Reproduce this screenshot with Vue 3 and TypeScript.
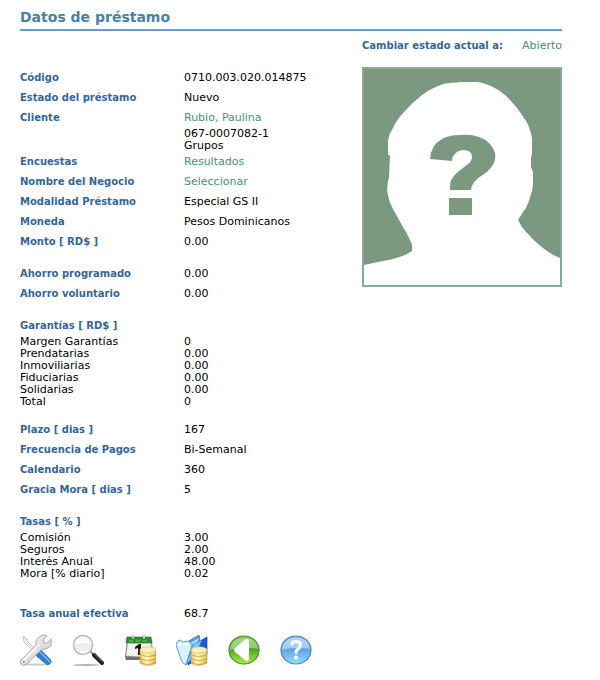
<script setup lang="ts">
interface Row {
  label: string
  value: string
  kind?: 'main' | 'sub' | 'link'
}

const groups: { gap: 'none' | 'small' | 'large'; rows: Row[] }[] = [
  {
    gap: 'none',
    rows: [
      { label: 'Código', value: '0710.003.020.014875' },
      { label: 'Estado del préstamo', value: 'Nuevo' },
      { label: 'Cliente', value: 'Rubio, Paulina', kind: 'link' },
      { label: '', value: '067-0007082-1', kind: 'sub' },
      { label: '', value: 'Grupos', kind: 'sub' },
      { label: 'Encuestas', value: 'Resultados', kind: 'link' },
      { label: 'Nombre del Negocio', value: 'Seleccionar', kind: 'link' },
      { label: 'Modalidad Préstamo', value: 'Especial GS II' },
      { label: 'Moneda', value: 'Pesos Dominicanos' },
      { label: 'Monto [ RD$ ]', value: '0.00' },
    ],
  },
  {
    gap: 'small',
    rows: [
      { label: 'Ahorro programado', value: '0.00' },
      { label: 'Ahorro voluntario', value: '0.00' },
    ],
  },
  {
    gap: 'small',
    rows: [
      { label: 'Garantías [ RD$ ]', value: '' },
      { label: 'Margen Garantías', value: '0', kind: 'sub' },
      { label: 'Prendatarias', value: '0.00', kind: 'sub' },
      { label: 'Inmoviliarias', value: '0.00', kind: 'sub' },
      { label: 'Fiduciarias', value: '0.00', kind: 'sub' },
      { label: 'Solidarias', value: '0.00', kind: 'sub' },
      { label: 'Total', value: '0', kind: 'sub' },
    ],
  },
  {
    gap: 'small',
    rows: [
      { label: 'Plazo [ dias ]', value: '167' },
      { label: 'Frecuencia de Pagos', value: 'Bi-Semanal' },
      { label: 'Calendario', value: '360' },
      { label: 'Gracia Mora [ dias ]', value: '5' },
    ],
  },
  {
    gap: 'small',
    rows: [
      { label: 'Tasas [ % ]', value: '' },
      { label: 'Comisión', value: '3.00', kind: 'sub' },
      { label: 'Seguros', value: '2.00', kind: 'sub' },
      { label: 'Interés Anual', value: '48.00', kind: 'sub' },
      { label: 'Mora [% diario]', value: '0.02', kind: 'sub' },
    ],
  },
  {
    gap: 'large',
    rows: [{ label: 'Tasa anual efectiva', value: '68.7' }],
  },
]
</script>

<template>
  <main class="page">
    <h1 class="title">Datos de préstamo</h1>

    <div class="content">
      <table class="details">
        <tbody v-for="(group, g) in groups" :key="g" :class="'gap-' + group.gap">
          <tr v-for="(row, r) in group.rows" :key="r" :class="row.kind ?? 'main'">
            <th scope="row">{{ row.label }}</th>
            <td>
              <a v-if="row.kind === 'link'" href="#">{{ row.value }}</a>
              <template v-else>{{ row.value }}</template>
            </td>
          </tr>
        </tbody>
      </table>

      <aside class="side">
        <div class="status">
          <strong>Cambiar estado actual a:</strong>
          <a href="#">Abierto</a>
        </div>
        <svg class="photo" viewBox="0 0 196 216" role="img" aria-label="Sin foto">
          <rect width="196" height="216" fill="#7a9980" />
          <path
            fill="#fff"
            d="M0 196 L19 192 Q38 189 48 182 Q49 176 46 171 Q43 164 39 158 L29 140 Q25 133 24 126 Q22 119 25 108 L26 87 L24 85 L24 71 Q25 65 29 59 Q33 50 41 42 Q49 33 58 26 Q66 20 74 17 Q80 14 86 14 L98 13 L114 13 Q121 14 129 18 Q139 23 146 31 Q153 38 158 46 Q165 56 166 61 Q168 66 168 71 L168 85 L167 88 L167 98 L169 103 L169 114 Q169 121 166 128 Q164 137 159 143 L154 151 Q157 158 163 164 Q170 172 179 179 Q188 186 196 189 V216 H0Z"
          />
          <path
            fill="#7a9980"
            d="M66 90 Q67 76 78 70 Q85 66 96 66 Q107 65 115 68 Q127 72 131 84 Q133 96 120 105 Q107 113 107 121 H86 Q85 109 94 103 L104 95 Q108 92 108 88 Q108 81 99 81 Q89 82 88 92 Z M85 129 H108 V146 H85Z"
          />
        </svg>
      </aside>
    </div>

    <nav class="toolbar" aria-label="Acciones">
      <button type="button" aria-label="Configurar">
        <svg viewBox="1 1 32 32">
          <defs>
            <linearGradient id="steel" x1="0" y1="0" x2="1" y2="1">
              <stop offset="0" stop-color="#fafafa" />
              <stop offset="1" stop-color="#c8c8c8" />
            </linearGradient>
            <linearGradient id="gold" x1="0" y1="0" x2="1" y2="0">
              <stop offset="0" stop-color="#e3bd4b" />
              <stop offset=".4" stop-color="#fff8c4" />
              <stop offset="1" stop-color="#dcb544" />
            </linearGradient>
          </defs>
          <ellipse cx="17" cy="31.5" rx="14" ry="1" fill="#c9c9c9" />
          <path d="M4 3 L8 6 L9 9 L20 20 L18 21 L7 11 L5 9Z" fill="#eee" stroke="#b5b5b5" stroke-width=".7" />
          <path d="M16 22 L21 16 L32 27 Q33 31 28 32Z" fill="#2f7fd0" stroke="#2468b0" stroke-width=".5" />
          <path d="M21 19 L31 29" stroke="#7fbdf2" stroke-width="1.5" />
          <path
            d="M2 27 L17 12 Q16 5 22 3 Q25 1 28 3 L24 7 L25 10 L28 10 L32 6 Q34 13 29 15 Q26 17 23 16 L8 31 Q4 34 2 31 Q1 29 2 27Z"
            fill="url(#steel)" stroke="#a0a0a0" stroke-width=".8"
          />
          <path d="M5 27 L20 12" stroke="#fff" stroke-width="1.2" />
          <circle cx="4.8" cy="29" r="1" fill="#999" />
        </svg>
      </button>

      <button type="button" aria-label="Buscar">
        <svg viewBox="1 1 32 32">
          <ellipse cx="15" cy="32" rx="13" ry="1" fill="#b5b5b5" />
          <path d="M19 18 L24 23" stroke="#999" stroke-width="2" />
          <path d="M23 22 L31 30" stroke="#222" stroke-width="4" stroke-linecap="round" />
          <path d="M24 21.5 L31 28.5" stroke="#777" stroke-width="1" />
          <circle cx="12" cy="12" r="9.6" fill="#ededed" stroke="#b3b3b3" stroke-width="1.2" />
          <path d="M4 12 Q5 4 12 4 Q19 4 20 11 Q12 9 4 12Z" fill="#fafafa" />
          <path d="M5 16 Q11 22 18 17" fill="none" stroke="#fff" stroke-width="1.5" />
        </svg>
      </button>

      <button type="button" aria-label="Calendario de pagos">
        <svg viewBox="1 1 32 32">
          <path d="M2 24 L4 8 H29 L30 27 H3Z" fill="#707070" />
          <path d="M3 23 L5 8 H28 L29 24Z" fill="#f2f2f2" stroke="#bbb" stroke-width=".5" />
          <path d="M4 4 H28 L29 10 H3Z" fill="#299528" stroke="#15701b" stroke-width=".6" />
          <path d="M6 8 H27" stroke="#75c66b" stroke-width="1" stroke-dasharray="4 3" />
          <path d="M10 2 V6 M21 2 V6" stroke="#999" stroke-width="2.2" />
          <path d="M10 2 V5 M21 2 V5" stroke="#fff" stroke-width="1" />
          <path d="M12 14 L16 11 H18 V22 H15 V15 L12 16Z" fill="#171717" />
          <path d="M17 17 V30 Q25 35 33 30 V17Z" fill="url(#gold)" stroke="#c9a13c" stroke-width=".6" />
          <path d="M17 21 Q25 26 33 21 M17 25 Q25 30 33 25 M17 29 Q25 34 33 29" fill="none" stroke="#bd9433" stroke-width=".7" />
          <path d="M18 20 Q25 24 32 20 M18 24 Q25 28 32 24" fill="none" stroke="#fff3a0" stroke-width="1" />
          <ellipse cx="25" cy="17" rx="8" ry="3.2" fill="#faefb4" stroke="#d8b75c" stroke-width=".6" />
        </svg>
      </button>

      <button type="button" aria-label="Expediente">
        <svg viewBox="1 1 32 32">
          <path d="M15 14 L32 4 L32 21 L13 32Z" fill="#1b5bd2" stroke="#1746a4" stroke-width=".7" />
          <path d="M9 11 L24 2 L25 8 L12 31Z" fill="#4fa4f2" stroke="#1d66c4" stroke-width=".7" />
          <path d="M12 12 L24 5 L16 24Z" fill="#b8e0fc" />
          <path d="M18 11 L27 7 L21 21 L11 32Z" fill="#7cc4fa" stroke="#247bd3" stroke-width=".6" />
          <path d="M1 12 Q2 7 5 7 L8 9 L14 8 L17 12 L11 32 L7 29Z" fill="#d9f2ff" stroke="#2d85dd" stroke-width=".8" />
          <path d="M4 12 L8 11 L13 11" fill="none" stroke="#fff" stroke-width="1.5" />
          <path d="M16 17 V30 Q24 35 32 30 V17Z" fill="url(#gold)" stroke="#c9a13c" stroke-width=".6" />
          <path d="M16 21 Q24 26 32 21 M16 25 Q24 30 32 25 M16 29 Q24 34 32 29" fill="none" stroke="#bd9433" stroke-width=".7" />
          <path d="M17 20 Q24 24 31 20 M17 24 Q24 28 31 24" fill="none" stroke="#fff3a0" stroke-width="1" />
          <ellipse cx="24" cy="17" rx="8" ry="3.2" fill="#faefb4" stroke="#d8b75c" stroke-width=".6" />
        </svg>
      </button>

      <button type="button" aria-label="Volver">
        <svg viewBox="1 1 32 32">
          <defs>
            <linearGradient id="green" x1="0" y1="0" x2="0" y2="1">
              <stop offset="0" stop-color="#82c75c" />
              <stop offset=".45" stop-color="#4fa325" />
              <stop offset="1" stop-color="#a6f03c" />
            </linearGradient>
          </defs>
          <ellipse cx="17" cy="17" rx="15" ry="14" fill="url(#green)" stroke="#469030" stroke-width="1.2" />
          <path d="M3 17 Q4 5 17 5 Q30 5 31 16 Q17 13 3 17Z" fill="#b9e2a0" opacity=".65" />
          <path d="M8 15 L19 6 Q22 5 22 8 V26 Q22 29 19 28 L8 19 Q6 17 8 15Z" fill="#fff" />
        </svg>
      </button>

      <button type="button" aria-label="Ayuda">
        <svg viewBox="1 1 32 32">
          <defs>
            <linearGradient id="blue" x1="0" y1="0" x2="0" y2="1">
              <stop offset="0" stop-color="#8fc3ee" />
              <stop offset=".5" stop-color="#5ea6e2" />
              <stop offset="1" stop-color="#97dcff" />
            </linearGradient>
          </defs>
          <ellipse cx="17" cy="17" rx="15" ry="14" fill="url(#blue)" stroke="#4c84bd" stroke-width="1.2" />
          <path d="M3 17 Q4 5 17 5 Q30 5 31 16 Q17 13 3 17Z" fill="#cbe4f8" opacity=".6" />
          <path d="M13 11 Q13 8.500 17 8.500 Q21.500 8.500 21.500 12 Q21.500 14 19 16 Q17 17.500 17 19.500" fill="none" stroke="#fff" stroke-width="3" stroke-linecap="round" />
          <circle cx="17" cy="24.5" r="2" fill="#fff" />
        </svg>
      </button>
    </nav>
  </main>
</template>

<style>
body {
  margin: 0;
  background: #fff;
}
</style>

<style scoped>
.page {
  padding: 7px 38px 12px 20px;
  color: #000;
  font-family: Verdana, 'DejaVu Sans', sans-serif;
  font-size: 11px;
  line-height: 12px;
}

.title {
  margin: 0;
  padding-bottom: 2px;
  border-bottom: 2px solid #6699cc;
  color: #4682a6;
  font-size: 14px;
  line-height: 20px;
}

.content {
  display: grid;
  grid-template-columns: 1fr 200px;
  align-items: start;
}

.details {
  margin-top: 37px;
  border-collapse: collapse;
}

.details th,
.details td {
  height: 12px;
  padding: 4px 0;
  text-align: left;
  vertical-align: top;
}

.details th {
  width: 164px;
  color: #336699;
  font-size: 10px;
}

.details .sub th,
.details .sub td {
  padding: 0;
}

.details .sub th {
  color: #000;
  font-size: 11px;
  font-weight: normal;
}

.gap-small tr:first-child > * {
  padding-top: 16px;
}

.gap-large tr:first-child > * {
  padding-top: 28px;
}

a {
  color: #439473;
  text-decoration: none;
}

.side {
  padding-top: 9px;
}

.status {
  display: flex;
  justify-content: space-between;
  margin-bottom: 15px;
  white-space: nowrap;
}

.status strong {
  color: #336699;
  font-size: 10px;
}

.photo {
  display: block;
  box-sizing: border-box;
  width: 100%;
  border: 2px solid #8caa91;
}

.toolbar {
  display: flex;
  gap: 20px;
  margin-top: 10px;
}

.toolbar button {
  width: 32px;
  height: 32px;
  padding: 0;
  border: 0;
  background: none;
  cursor: pointer;
}

.toolbar svg {
  display: block;
  width: 32px;
  height: 32px;
}
</style>
